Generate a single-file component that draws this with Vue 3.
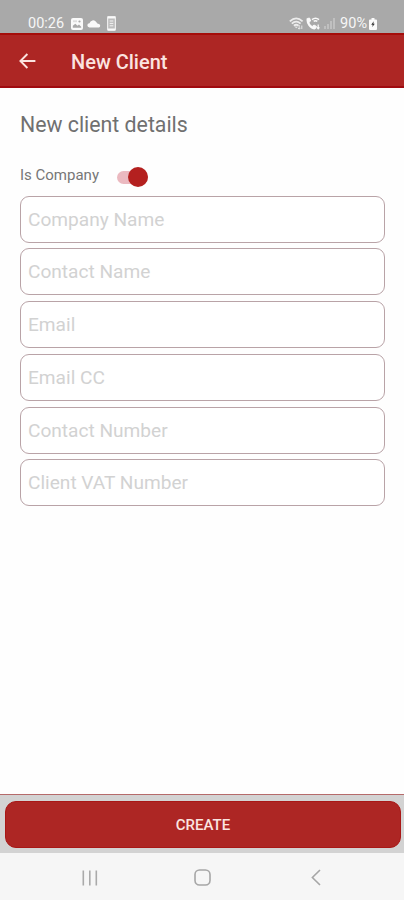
<script setup>
import { reactive, ref } from "vue"

const isCompany = ref(true)

const fields = reactive([
  { key: "company", label: "Company Name", type: "text", value: "" },
  { key: "contact", label: "Contact Name", type: "text", value: "" },
  { key: "email", label: "Email", type: "email", value: "" },
  { key: "emailCc", label: "Email CC", type: "email", value: "" },
  { key: "phone", label: "Contact Number", type: "tel", value: "" },
  { key: "vat", label: "Client VAT Number", type: "text", value: "" }
])
</script>

<template>
  <div class="screen">
    <div class="status">
      <span class="clock">00:26</span>
      <svg class="picture" width="12" height="12" viewBox="0 0 12 12">
        <rect width="12" height="12" rx="2" fill="#fafafa" />
        <path d="M1.8 9.8V7.8L4.3 5.8L6.5 7.8L8 6.5L10.2 8.8V9.8Z" fill="#a9a9a9" />
        <path d="M2 2.3H6V4.2H2Z" fill="#dedede" />
        <circle cx="8.5" cy="3.5" r="1.1" fill="#a9a9a9" />
      </svg>
      <svg class="cloud" width="14" height="9" viewBox="0 0 14 9">
        <path d="M2.5 8.5A2 2 0 0 1 2.5 4.2A3.8 3.8 0 0 1 9.2 2.9Q10.2 4.6 11.8 5A1.8 1.8 0 0 1 11.8 8.5Z" fill="#fafafa" />
      </svg>
      <svg class="phone" width="9" height="15" viewBox="0 0 9 15">
        <rect x=".6" y=".6" width="7.8" height="13.8" rx=".8" fill="#bdbdbd" stroke="#ededed" stroke-width="1.2" />
        <path d="M1 1.6H8M1 13.2H8" stroke="#fafafa" stroke-width="1.6" />
        <path d="M2.7 5H6.3M2.7 7.4H6.3M2.7 9.8H6.3" stroke="#f4f4f4" stroke-width="1" />
      </svg>

      <div class="signals">
        <svg width="15" height="13" viewBox="0 0 15 13" fill="none" stroke="#ececec">
          <path d="M.8 4.3Q7.2-1.5 13.6 4.3M2.8 6.6Q7.2 2.7 11.6 6.6M4.9 8.8Q7.2 6.8 9.5 8.8" stroke-width="1.8" />
          <path d="M5.6 9.4L7.2 11.3L8.5 9.7Z" fill="#ececec" stroke="none" />
          <path d="M10.2 8V12M8.9 10.8L10.2 12.2L11.5 10.8M12.8 12V8.5" stroke-width=".9" />
        </svg>
        <svg class="call" width="15" height="13" viewBox="0 0 15 13" fill="none" stroke="#fafafa">
          <path d="M1.8 1.5C.8 6 4.5 11 9 11.3" stroke-width="2.2" />
          <path d="M1.6 1.4L3.6 1.1L4.6 4L3 5.3ZM6.6 9.2L8 8L10.5 9.4L9.6 11.6Z" fill="#fafafa" />
          <path d="M6 2.6Q9.5-.1 13 2.6M7.7 4.4Q9.5 3 11.3 4.4" stroke-width="1.6" />
          <path d="M12.2 7.5V11.5M11 10.4L12.2 11.8L13.4 10.4" stroke-width="1.3" />
        </svg>
        <svg class="bars" width="11" height="11" viewBox="0 0 11 11" fill="#c0c0c0">
          <rect y="8" width="2" height="3" />
          <rect x="3" y="6" width="2" height="5" />
          <rect x="6" y="3" width="2" height="8" />
          <rect x="9" width="2" height="11" />
        </svg>
        <span class="percent">90%</span>
        <svg class="battery" width="8" height="12" viewBox="0 0 8 12">
          <path d="M2.5 0H5.5V1.5H7Q8 1.5 8 2.5V11Q8 12 7 12H1Q0 12 0 11V2.5Q0 1.5 1 1.5H2.5Z" fill="#fafafa" />
          <path d="M4.7 3.2L2.2 6.8H3.7L3.3 9L5.8 5.8H4.4Z" fill="#333" />
        </svg>
      </div>
    </div>

    <header class="toolbar">
      <svg width="17" height="16" viewBox="0 0 17 16" fill="none" stroke="#fbe4e0" stroke-width="1.9">
        <path d="M16.4 8H1.6M8.4 1L1.4 8L8.4 15" />
      </svg>
      <h1>New Client</h1>
    </header>

    <main>
      <h2>New client details</h2>
      <div class="company">
        <span>Is Company</span>
        <button
          type="button"
          role="switch"
          aria-label="Is Company"
          :aria-checked="isCompany"
          :class="{ 'switch': true, 'on': isCompany }"
          @click="isCompany = !isCompany"
        >
          <i></i>
        </button>
      </div>
      <form>
        <input
          v-for="field in fields"
          :key="field.key"
          v-model="field.value"
          :type="field.type"
          :placeholder="field.label"
        >
      </form>
    </main>

    <footer>
      <button type="button" class="create">CREATE</button>
    </footer>

    <nav>
      <svg width="16" height="16" viewBox="0 0 16 16" stroke="#aaa" stroke-width="1.6">
        <path d="M1.3 .5V15.5M7.8 .5V15.5M14.3 .5V15.5" />
      </svg>
      <svg class="home" width="17" height="17" viewBox="0 0 17 17" fill="none" stroke="#a6a6a6" stroke-width="1.6">
        <rect x="1" y="1" width="15" height="15" rx="4.5" />
      </svg>
      <svg width="10" height="17" viewBox="0 0 10 17" fill="none" stroke="#a6a6a6" stroke-width="1.6">
        <path d="M9 1L1.4 8.5L9 16" />
      </svg>
    </nav>
  </div>
</template>

<style>
body {
  margin: 0;
  background: #fff;
}
</style>

<style scoped>
.screen {
  display: flex;
  flex-direction: column;
  height: 900px;
  font-family: Roboto, "Liberation Sans", sans-serif;
  background: #fefefe;
}

.screen svg {
  display: block;
  flex: none;
}

/* status bar */
.status {
  box-sizing: border-box;
  display: flex;
  align-items: center;
  height: 33px;
  padding: 14px 27px 0 28px;
  color: #f6f6f6;
  background: #a9a9a9;
  font-size: 14.5px;
  line-height: 19px;
}

.clock {
  width: 43px;
}

.cloud {
  margin-left: 4px;
}

.phone {
  margin-left: 6px;
}

.signals {
  display: flex;
  align-items: center;
  margin-left: auto;
}

.call {
  margin-left: 2px;
}

.bars {
  margin-left: 3px;
}

.percent {
  margin-left: 5px;
}

.battery {
  margin-left: 2px;
}

/* toolbar */
.toolbar {
  box-sizing: border-box;
  display: flex;
  align-items: center;
  height: 55px;
  padding-left: 19px;
  border-top: 2px solid #a50d0a;
  border-bottom: 2px solid #a00b10;
  background: #ad2624;
}

h1 {
  margin: 2px 0 0 35px;
  color: #fbe4e0;
  font-size: 20px;
  font-weight: 500;
  line-height: 24px;
}

main {
  flex: 1;
  padding: 23px 19px 0 20px;
}

h2 {
  margin: 0;
  color: #707070;
  font-size: 21.3px;
  font-weight: 400;
  line-height: 28px;
}

.company {
  display: flex;
  align-items: center;
  height: 22px;
  margin-top: 25px;
  color: #777;
  font-size: 15px;
  line-height: 22px;
}

.company span {
  width: 97px;
}

.switch {
  display: flex;
  align-items: center;
  width: 31px;
  height: 13px;
  margin-top: 4px;
  padding: 0;
  border: none;
  border-radius: 7px;
  background: #ccc;
}

.switch i {
  flex: none;
  width: 20px;
  height: 20px;
  border-radius: 50%;
  background: #eee;
}

.switch.on {
  justify-content: flex-end;
  background: #ebb9c0;
}

.switch.on i {
  background: #b4201f;
}

form {
  display: flex;
  flex-direction: column;
  gap: 5.8px;
  margin-top: 9.5px;
}

input {
  box-sizing: border-box;
  width: 100%;
  height: 47px;
  padding: 0 7px;
  border: 1px solid #b9a3a7;
  border-radius: 9px;
  outline: none;
  color: #555;
  background: #fff;
  font: 400 19.1px Roboto, "Liberation Sans", sans-serif;
}

input::placeholder {
  color: #d2d2d2;
  opacity: 1;
}

/* bottom action */
footer {
  box-sizing: border-box;
  height: 59px;
  padding: 6px 3px 5px 5px;
  border-top: 1px solid #b56b6b;
  background: #d3d3d3;
}

.create {
  display: block;
  width: 100%;
  height: 47px;
  padding: 1px 0 0;
  border: 1px solid #a91716;
  border-radius: 11px;
  color: #fbe4e0;
  background: #ad2624;
  font: 500 15px Roboto, "Liberation Sans", sans-serif;
}

/* system navigation */
nav {
  display: flex;
  align-items: center;
  justify-content: space-between;
  height: 47px;
  padding: 2px 83px 0 82px;
  box-sizing: border-box;
  background: #f6f6f6;
}

.home {
  margin-right: 4px;
}
</style>
